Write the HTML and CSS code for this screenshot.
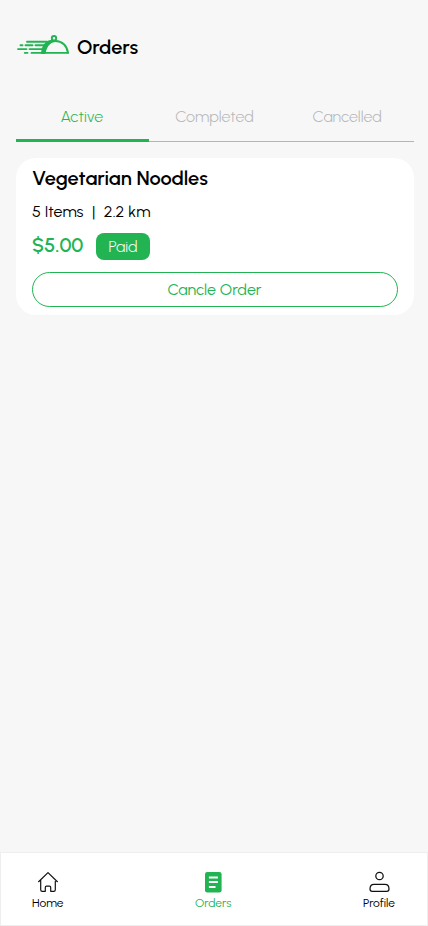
FILE: index.html
```html
<!DOCTYPE html>
<html lang="en">
<head>
<meta charset="utf-8">
<meta name="viewport" content="width=device-width, initial-scale=1">
<title>Orders</title>
<link rel="stylesheet" href="styles.css">
</head>
<body>
<div class="app">
  <header class="header">
    <svg class="logo" width="54" height="22" viewBox="0 0 54 22" fill="none" stroke="#22b452" stroke-width="1.9" stroke-linecap="round">
      <path d="M11 7.7H31M9.5 11.3H16.5M19.5 11.3H29M4.5 11.3H6.5M2 15.1H10.5M13.5 15.1H28M8.8 18.9H11.5M15.5 18.9H52.2" />
      <path d="M26 19C26.5 11 31 6.8 37 6.8C32 9.2 29.5 13 28.5 19Z" fill="#22b452" />
      <path d="M28.5 18.5C29.2 11.5 33 7 39.5 7C46.3 7 51 11.8 51.9 18.5" />
      <circle cx="38" cy="4.2" r="2.2" />
    </svg>
    <h1 class="title">Orders</h1>
  </header>
  <nav class="tabs">
    <button class="tab tab-active">Active</button>
    <button class="tab">Completed</button>
    <button class="tab">Cancelled</button>
  </nav>
  <main class="content">
    <article class="card">
      <h2 class="name">Vegetarian Noodles</h2>
      <p class="meta"><span>5 Items</span><span>|</span><span class="distance">2.2 km</span></p>
      <div class="pricing"><span class="price">$5.00</span><span class="badge">Paid</span></div>
      <button class="cancel">Cancle Order</button>
    </article>
  </main>
  <nav class="bottom">
    <a class="link">
      <svg width="22" height="22" viewBox="0 0 22 22" fill="none" stroke="#111" stroke-width="1.2" stroke-linejoin="round" stroke-linecap="round"><path d="M1.6 10.7L11 1.6L20.4 10.7M3.7 8.8V18.7Q3.7 20.3 5.3 20.3H8.3V16.4Q8.3 15.2 9.5 15.2H12.5Q13.7 15.2 13.7 16.4V20.3H16.7Q18.3 20.3 18.3 18.7V8.8"/></svg>
      <span>Home</span>
    </a>
    <a class="link link-orders">
      <svg width="22" height="22" viewBox="0 0 22 22"><rect x="3" y="1" width="16.6" height="20.4" rx="2.2" fill="#22b452"/><path d="M6.9 6.6H15.9M6.9 11H15.9M6.9 15.9H13.5" stroke="#fff" stroke-width="2"/></svg>
      <span>Orders</span>
    </a>
    <a class="link">
      <svg width="22" height="22" viewBox="0 0 22 22" fill="none" stroke="#111" stroke-width="1.25"><circle cx="11.5" cy="5" r="3.7"/><path d="M6 13.4H17Q21 13.4 21 18.1Q21 20.4 18.8 20.4H4.2Q2 20.4 2 18.1Q2 13.4 6 13.4Z"/></svg>
      <span>Profile</span>
    </a>
  </nav>
</div>
</body>
</html>
```
FILE: styles.css
```css
* { box-sizing: border-box; }
body { margin: 0; background: #f7f7f7; color: #000; font-family: Urbanist, Lato, sans-serif; font-size: 16px; font-weight: 300; }
button { font: inherit; color: inherit; background: none; border: 0; padding: 0; }
h1, h2, p { margin: 0; }
svg { display: block; flex: none; }
.app { display: flex; flex-direction: column; height: 926px; }
.header { display: flex; align-items: center; height: 94px; padding-left: 16px; gap: 7px; }
.logo { margin-bottom: 4px; }
.title { font-size: 20px; line-height: 24px; font-weight: 600; }
.tabs { display: grid; grid-template-columns: repeat(3, 1fr); height: 48px; margin: 0 14px 0 16px; border-bottom: 1px solid #b4b4b4; color: #b5b5b5; }
.tab { height: 48px; padding: 0 1px 3px 0; }
.tab-active { color: #22b452; border-bottom: 3px solid #22b452; padding-bottom: 0; }
.content { flex: 1; padding: 16px 14px 0 16px; }
.card { display: flex; flex-direction: column; height: 157px; padding: 8px 16px; border-radius: 20px; background: #fff; }
.name { font-size: 20px; line-height: 24px; font-weight: 600; }
.meta { display: flex; gap: 8.5px; margin-top: 12px; line-height: 20px; font-weight: 400; }
.distance { letter-spacing: 0.08px; }
.pricing { display: flex; align-items: center; height: 27px; margin-top: 11px; gap: 13px; }
.price { width: 51px; margin-bottom: 3px; font-size: 20px; line-height: 24px; font-weight: 600; color: #22b452; white-space: nowrap; }
.badge { width: 54px; height: 27px; border-radius: 8px; background: #22b452; color: #fff; line-height: 27px; text-align: center; }
.cancel { flex: none; height: 35px; margin-top: 12px; padding-right: 1px; border: 1px solid #22b452; border-radius: 18px; color: #22b452; font-weight: 400; }
.bottom { display: flex; justify-content: space-between; height: 74px; padding: 18px 32px 0 31px; border: 1px solid #eee; background: #fff; }
.link { display: flex; flex-direction: column; align-items: center; font-size: 12px; line-height: 14px; gap: 3px; font-weight: 400; }
.link-orders { color: #22b452; }
```
